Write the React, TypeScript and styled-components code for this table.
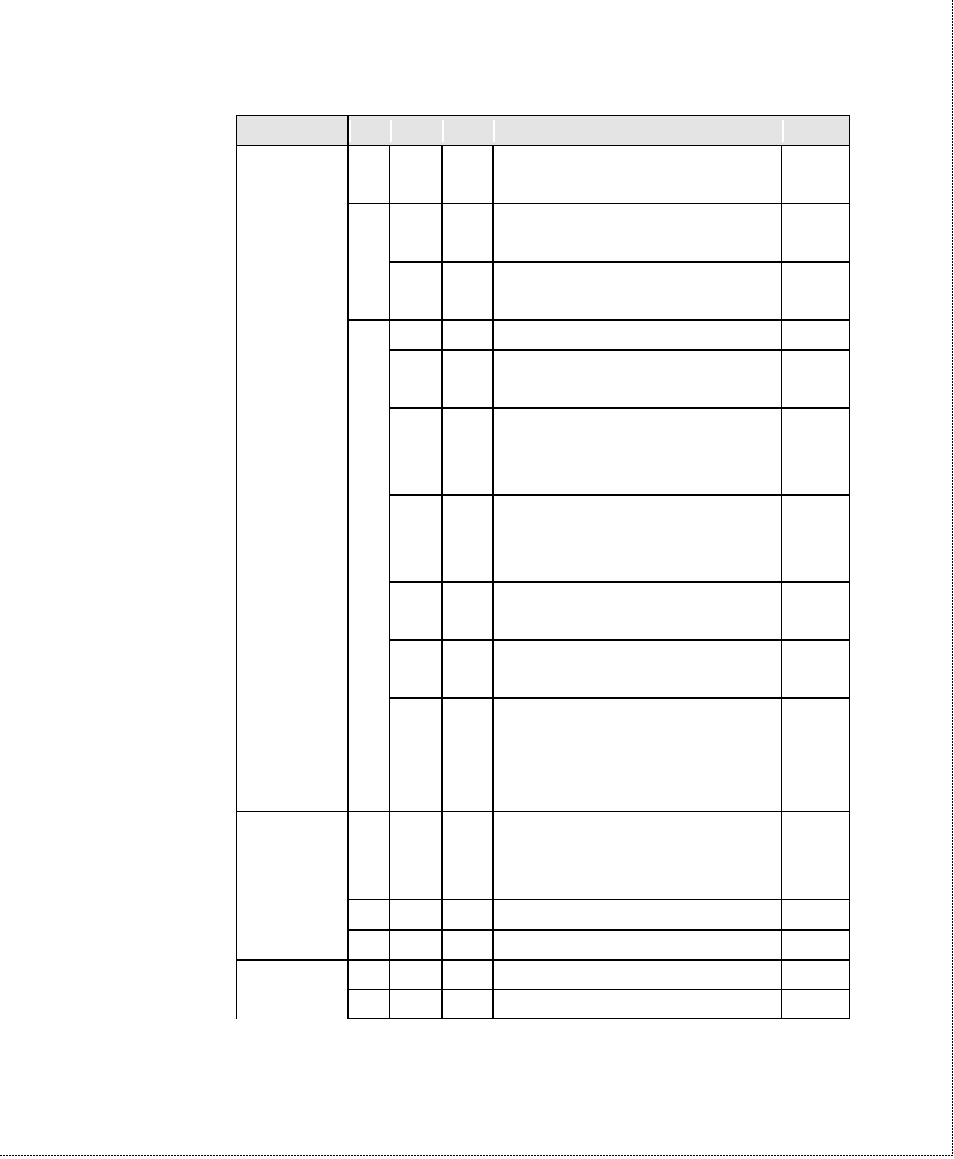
import React from 'react';
import styled, { createGlobalStyle } from 'styled-components';

const GlobalStyle = createGlobalStyle`
  html, body {
    margin: 0;
    padding: 0;
    background: #fff;
    font-family: "Liberation Sans", Arial, sans-serif;
  }
`;

const Page = styled.div`
  display: grid;
  grid-template-columns: 952px 1px;
  grid-template-rows: 1155px 1px;
  width: 953px;
`;

const Sheet = styled.div`
  padding: 115px 0 0 236px;
  box-sizing: border-box;
`;

const VRule = styled.div`
  background: repeating-linear-gradient(to bottom, #000 0 2px, transparent 2px 3px);
`;

const HRule = styled.div`
  grid-column: 1 / 3;
  background: repeating-linear-gradient(to right, #000 0 2px, transparent 2px 3px);
`;

const Table = styled.table`
  border-collapse: collapse;
  table-layout: fixed;
`;

const line = (w?: number) => (w ? `${w}px solid #000` : 'none');

const HeadCell = styled.th<{ $l: number; $r?: number; $sep?: boolean }>`
  padding: 0;
  height: 29px;
  background-color: #e4e4e4;
  background-image: ${p =>
    p.$sep ? 'linear-gradient(to right, #fff 0 2px, transparent 2px)' : 'none'};
  background-size: 100% 22px;
  background-position: left 4px;
  background-repeat: no-repeat;
  border-top: 1px solid #000;
  border-bottom: 1px solid #000;
  border-left: ${p => line(p.$l)};
  border-right: ${p => line(p.$r)};
`;

const Row = styled.tr<{ $h: number }>`
  height: ${p => p.$h}px;
`;

const Cell = styled.td<{ $t?: number; $l?: number; $r?: number; $b?: number }>`
  padding: 0;
  border-top: ${p => line(p.$t ?? 1)};
  border-left: ${p => line(p.$l ?? 1)};
  border-right: ${p => line(p.$r)};
  border-bottom: ${p => line(p.$b)};
`;

// the four right-hand cells that every row has
const Tail = ({ t = 1, b }: { t?: number; b?: number }) => (
  <>
    <Cell $t={t} $l={1} $b={b} />
    <Cell $t={t} $l={2} $b={b} />
    <Cell $t={t} $l={2} $b={b} />
    <Cell $t={t} $l={1} $r={1} $b={b} />
  </>
);

const widths = [111, 42, 52, 51, 289, 68];

export default function App() {
  return (
    <>
      <GlobalStyle />
      <Page>
        <Sheet>
          <Table>
            <colgroup>
              {widths.map((w, i) => (
                <col key={i} style={{ width: w }} />
              ))}
            </colgroup>
            <thead>
              <tr>
                <HeadCell $l={1} />
                <HeadCell $l={2} $sep />
                <HeadCell $l={0} $sep />
                <HeadCell $l={0} $sep />
                <HeadCell $l={0} $sep />
                <HeadCell $l={0} $r={1} $sep />
              </tr>
            </thead>
            <tbody>
              <Row $h={58}>
                <Cell rowSpan={10} />
                <Cell $l={2} />
                <Tail />
              </Row>
              <Row $h={58}>
                <Cell rowSpan={2} $l={2} />
                <Tail />
              </Row>
              <Row $h={58}>
                <Tail t={2} />
              </Row>
              <Row $h={30}>
                <Cell rowSpan={7} $t={2} $l={2} />
                <Tail t={2} />
              </Row>
              <Row $h={58}>
                <Tail t={2} />
              </Row>
              <Row $h={87}>
                <Tail t={2} />
              </Row>
              <Row $h={87}>
                <Tail t={2} />
              </Row>
              <Row $h={58}>
                <Tail t={2} />
              </Row>
              <Row $h={58}>
                <Tail t={2} />
              </Row>
              <Row $h={114}>
                <Tail t={2} />
              </Row>
              <Row $h={88}>
                <Cell rowSpan={3} />
                <Cell $l={2} />
                <Tail />
              </Row>
              <Row $h={30}>
                <Cell $l={2} />
                <Tail />
              </Row>
              <Row $h={30}>
                <Cell $t={2} $l={2} />
                <Tail t={2} />
              </Row>
              <Row $h={30}>
                <Cell rowSpan={2} $t={2} />
                <Cell $t={2} $l={2} />
                <Tail t={2} />
              </Row>
              <Row $h={29}>
                <Cell $l={2} $b={1} />
                <Tail b={1} />
              </Row>
            </tbody>
          </Table>
        </Sheet>
        <VRule />
        <HRule />
      </Page>
    </>
  );
}
